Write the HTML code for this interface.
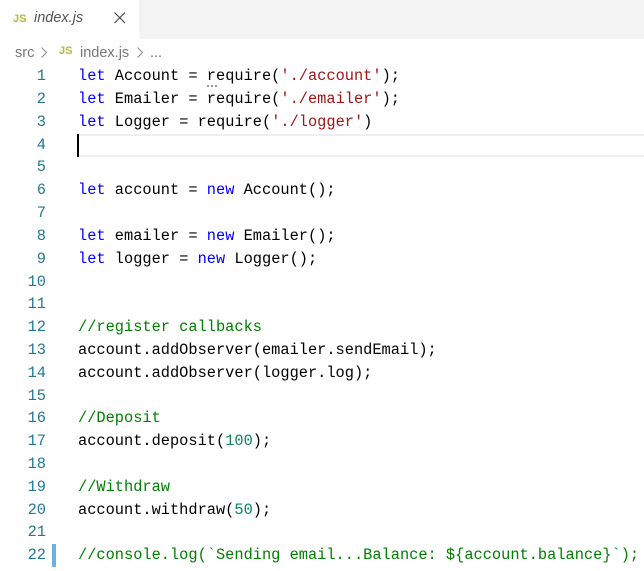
<!DOCTYPE html>
<html><head><meta charset="utf-8">
<style>
html,body{margin:0;padding:0;width:644px;height:571px;overflow:hidden;background:#fff}
.a{position:absolute}
#tabbar{left:0;top:0;width:644px;height:39px;background:#f3f3f3}
#tab{left:0;top:0;width:139px;height:39px;background:#fff}
.ui{font-family:"Liberation Sans",sans-serif;color:#777;white-space:pre}
.js{font-family:"Liberation Sans",sans-serif;font-weight:bold;font-size:11px;color:#b7b73b;letter-spacing:0}
.l{position:absolute;left:78px;height:23px;line-height:23px;font-family:"Liberation Mono",monospace;font-size:15.33px;color:#000;white-space:pre}
.n{position:absolute;left:0;width:46px;text-align:right;height:23px;line-height:23px;font-family:"Liberation Mono",monospace;font-size:15.33px;color:#237893}
.k{color:#0000ff}.s{color:#a31515}.c{color:#008000}.t{color:#267f99}.f{color:#795e26}.v{color:#001080}.d{color:#098658}
</style></head><body>
<div class="a" id="tabbar"></div>
<div class="a" id="tab"></div>
<div class="a js" style="left:13px;top:13px">JS</div>
<div class="a ui" style="left:34px;top:10px;font-size:14.5px;font-style:italic;color:#555">index.js</div>
<svg class="a" style="left:113px;top:11px" width="14" height="14" viewBox="0 0 14 14"><path d="M1.5 1.5L12 12M12 1.5L1.5 12" stroke="#444" stroke-width="1.1" fill="none"/></svg>
<div class="a ui" style="left:15px;top:45px;font-size:14.5px">src</div>
<svg class="a" style="left:40px;top:46px" width="9" height="13" viewBox="0 0 9 13"><path d="M1.5 1.5L6.5 6.5L1.5 11.5" stroke="#888" stroke-width="1" fill="none"/></svg>
<div class="a js" style="left:59px;top:45px">JS</div>
<div class="a ui" style="left:80px;top:45px;font-size:14.5px">index.js</div>
<svg class="a" style="left:136px;top:46px" width="9" height="13" viewBox="0 0 9 13"><path d="M1.5 1.5L6.5 6.5L1.5 11.5" stroke="#888" stroke-width="1" fill="none"/></svg>
<div class="a ui" style="left:150px;top:45px;font-size:14.5px">...</div>

<div class="a" style="left:78px;top:134px;width:566px;height:23px;box-sizing:border-box;border-top:2px solid #eee;border-bottom:2px solid #eee"></div>
<div class="a" style="left:77px;top:134px;width:2px;height:23px;background:#000"></div>
<div class="a" style="left:207px;top:85px;width:12px;height:2px;background-image:linear-gradient(90deg,#999 50%,transparent 50%);background-size:4px 2px"></div>
<div class="a" style="left:52px;top:544px;width:4px;height:23px;background:#6cb0e0"></div>

<div class="n" style="top:65px">1</div>
<div class="n" style="top:88px">2</div>
<div class="n" style="top:111px">3</div>
<div class="n" style="top:134px">4</div>
<div class="n" style="top:156px">5</div>
<div class="n" style="top:179px">6</div>
<div class="n" style="top:202px">7</div>
<div class="n" style="top:225px">8</div>
<div class="n" style="top:248px">9</div>
<div class="n" style="top:271px">10</div>
<div class="n" style="top:293px">11</div>
<div class="n" style="top:316px">12</div>
<div class="n" style="top:339px">13</div>
<div class="n" style="top:362px">14</div>
<div class="n" style="top:385px">15</div>
<div class="n" style="top:407px">16</div>
<div class="n" style="top:430px">17</div>
<div class="n" style="top:453px">18</div>
<div class="n" style="top:476px">19</div>
<div class="n" style="top:499px">20</div>
<div class="n" style="top:521px">21</div>
<div class="n" style="top:544px">22</div>

<div class="l" style="top:65px"><span class="k">let</span> Account = require(<span class="s">'./account'</span>);</div>
<div class="l" style="top:88px"><span class="k">let</span> Emailer = require(<span class="s">'./emailer'</span>);</div>
<div class="l" style="top:111px"><span class="k">let</span> Logger = require(<span class="s">'./logger'</span>)</div>
<div class="l" style="top:179px"><span class="k">let</span> account = <span class="k">new</span> Account();</div>
<div class="l" style="top:225px"><span class="k">let</span> emailer = <span class="k">new</span> Emailer();</div>
<div class="l" style="top:248px"><span class="k">let</span> logger = <span class="k">new</span> Logger();</div>
<div class="l" style="top:316px"><span class="c">//register callbacks</span></div>
<div class="l" style="top:339px">account.addObserver(emailer.sendEmail);</div>
<div class="l" style="top:362px">account.addObserver(logger.log);</div>
<div class="l" style="top:407px"><span class="c">//Deposit</span></div>
<div class="l" style="top:430px">account.deposit(<span class="d">100</span>);</div>
<div class="l" style="top:476px"><span class="c">//Withdraw</span></div>
<div class="l" style="top:499px">account.withdraw(<span class="d">50</span>);</div>
<div class="l" style="top:544px"><span class="c">//console.log(`Sending email...Balance: ${account.balance}`);</span></div>
</body></html>
